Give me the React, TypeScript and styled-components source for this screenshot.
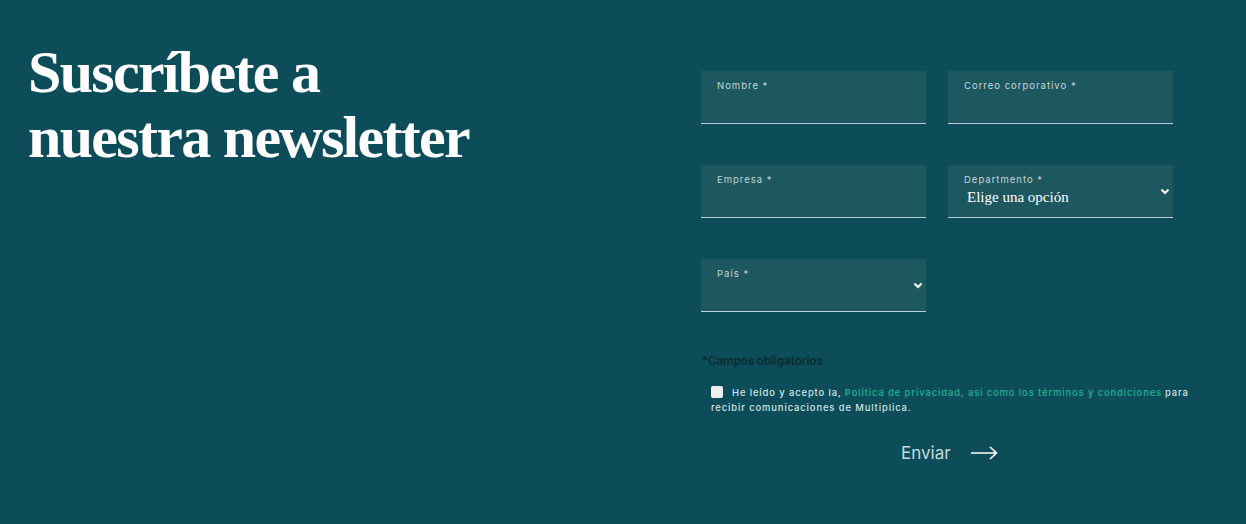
import React from 'react'
import styled, { createGlobalStyle } from 'styled-components'

const GlobalStyle = createGlobalStyle`
  html, body {
    margin: 0;
    padding: 0;
    background: #0c4d59;
  }
  * { box-sizing: border-box; }
`

const StyledContainer = styled.section`
  display: flex;
  justify-content: space-between;

  height: 524px;
  padding: 0 52px 0 28px;

  background: #0c4d59;
  font-family: Inter, 'Liberation Sans', sans-serif;
`

const StyledHeading = styled.h2`
  margin: 40px 0 0;

  color: #ffffff;
  font-family: 'Liberation Serif', 'DejaVu Serif', serif;
  font-size: 60px;
  font-weight: 700;
  line-height: 65px;
  letter-spacing: -1.7px;
`

const StyledForm = styled.form`
  display: flex;
  flex-direction: column;

  width: 493px;
  padding-top: 71px;
`

const StyledGrid = styled.div`
  display: grid;
  grid-template-columns: 225px 225px;
  grid-column-gap: 22px;
  grid-row-gap: 41px;
`

const StyledField = styled.label`
  position: relative;
  display: flex;
  flex-direction: column;

  height: 53px;
  padding: 8px 16px 0;

  background: #1d5760;
  border-bottom: 1px solid #b9d0d3;
`

const StyledLabel = styled.span`
  color: #c5d6d8;
  font-size: 9.5px;
  letter-spacing: 1px;
  line-height: 14px;
`

const StyledInput = styled.input`
  width: 100%;
  padding: 0;
  border: 0;
  outline: none;

  background: transparent;
  color: #ffffff;
  font-size: 16px;
`

const StyledSelect = styled.select`
  width: 100%;
  margin: 1px 0 0 -1px;
  padding: 0 24px 0 4px;
  border: 0;
  outline: none;
  appearance: none;

  background: transparent;
  color: #ffffff;
  font-family: 'Liberation Serif', serif;
  font-size: 15px;
  line-height: 18px;
`

const StyledChevron = styled.svg`
  position: absolute;
  right: 2px;
  top: 20px;
`

const StyledRequired = styled.p`
  margin: 42px 0 0 1px;

  color: #0a2b31;
  font-size: 11.5px;
  font-weight: 600;
`

const StyledConsent = styled.div`
  margin: 17px 0 0 10px;

  color: #d7e3e5;
  font-size: 9.4px;
  font-weight: 500;
  letter-spacing: 0.9px;
  line-height: 15px;
`

const StyledCheckbox = styled.span`
  display: inline-block;
  vertical-align: -2px;

  width: 12px;
  height: 12px;
  margin-right: 9px;

  background: #e9eef0;
  border-radius: 2px;
`

const StyledLink = styled.a`
  margin: 0 3px;

  color: #1fb597;
  text-decoration: none;
`

const StyledSubmit = styled.button`
  display: flex;
  align-items: center;
  gap: 20px;
  align-self: flex-start;

  margin: 28px 0 0 200px;
  padding: 0;
  border: 0;

  background: transparent;
  color: #c8d9db;
  font-family: Inter, 'Liberation Sans', sans-serif;
  font-size: 17px;
  cursor: pointer;
`

const Chevron = () => (
  <StyledChevron width="12" height="12" viewBox="0 0 12 12">
    <path d="M2.5 4.5 L6 8 L9.5 4.5" stroke="#ffffff" strokeWidth="2" fill="none" />
  </StyledChevron>
)

const Arrow = () => (
  <svg width="27" height="14" viewBox="0 0 27 14">
    <path d="M0 7 H25 M19 1 L25.5 7 L19 13" stroke="#ffffff" strokeWidth="1.6" fill="none" />
  </svg>
)

const App: React.FC = () => (
  <>
    <GlobalStyle />
    <StyledContainer>
      <StyledHeading>
        Suscríbete a
        <br />
        nuestra newsletter
      </StyledHeading>
      <StyledForm>
        <StyledGrid>
          <StyledField>
            <StyledLabel>Nombre *</StyledLabel>
            <StyledInput type="text" />
          </StyledField>
          <StyledField>
            <StyledLabel>Correo corporativo *</StyledLabel>
            <StyledInput type="email" />
          </StyledField>
          <StyledField>
            <StyledLabel>Empresa *</StyledLabel>
            <StyledInput type="text" />
          </StyledField>
          <StyledField>
            <StyledLabel>Departmento *</StyledLabel>
            <StyledSelect defaultValue="">
              <option value="">Elige una opción</option>
            </StyledSelect>
            <Chevron />
          </StyledField>
          <StyledField>
            <StyledLabel>País *</StyledLabel>
            <StyledSelect defaultValue="">
              <option value=""></option>
            </StyledSelect>
            <Chevron />
          </StyledField>
        </StyledGrid>
        <StyledRequired>*Campos obligatorios</StyledRequired>
        <StyledConsent>
          <StyledCheckbox />
          He leído y acepto la,
          <StyledLink href="#">Política de privacidad, así como los términos y condiciones</StyledLink>
          para recibir comunicaciones de Multiplica.
        </StyledConsent>
        <StyledSubmit type="button">
          Enviar
          <Arrow />
        </StyledSubmit>
      </StyledForm>
    </StyledContainer>
  </>
)

export default App
